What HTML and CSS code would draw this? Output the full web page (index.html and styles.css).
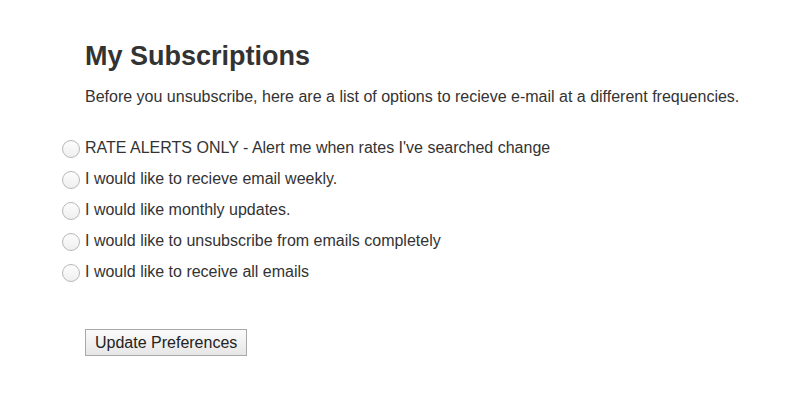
FILE: index.html
```html
<!DOCTYPE html>
<html>
<head>
<meta charset="utf-8">
<link rel="stylesheet" href="styles.css">
</head>
<body>
<div class="page">
  <h1 class="title">My Subscriptions</h1>
  <p class="intro">Before you unsubscribe, here are a list of options to recieve e-mail at a different frequencies.</p>
  <form class="options">
    <label class="option"><span class="radio"></span><span>RATE ALERTS ONLY - Alert me when rates I've searched change</span></label>
    <label class="option"><span class="radio"></span><span>I would like to recieve email weekly.</span></label>
    <label class="option"><span class="radio"></span><span>I would like monthly updates.</span></label>
    <label class="option"><span class="radio"></span><span>I would like to unsubscribe from emails completely</span></label>
    <label class="option"><span class="radio"></span><span>I would like to receive all emails</span></label>
    <div class="actions"><button type="button" class="btn">Update Preferences</button></div>
  </form>
</div>
</body>
</html>
```
FILE: styles.css
```css
* { box-sizing: border-box; }
html, body { margin: 0; padding: 0; background: #fff; }
body { font-family: "Liberation Sans", Arial, sans-serif; color: #333; }
.page { padding: 38px 0 0 85px; }
.title { margin: 0; font-size: 27px; font-weight: bold; line-height: 36px; color: #333; }
.intro { margin: 13px 0 0; font-size: 16px; line-height: 20px; }
.options { margin: 25px 0 0 -24px; display: flex; flex-direction: column; }
.option { display: flex; align-items: center; gap: 6px; height: 31px; font-size: 16px; }
.radio { width: 18px; height: 18px; margin-left: 1px; margin-right: -1px; border-radius: 50%; border: 1px solid #b8b8b8; background: linear-gradient(#fdfdfd, #efefef); margin-top: 2px; }
.actions { margin: 42px 0 0 24px; }
.btn { font-family: "Liberation Sans", Arial, sans-serif; font-size: 16px; color: #222; padding: 0 9px; height: 27px; border: 1px solid #a8a8a8; border-radius: 0; background: linear-gradient(#fbfbfb, #e6e6e6); }
```
